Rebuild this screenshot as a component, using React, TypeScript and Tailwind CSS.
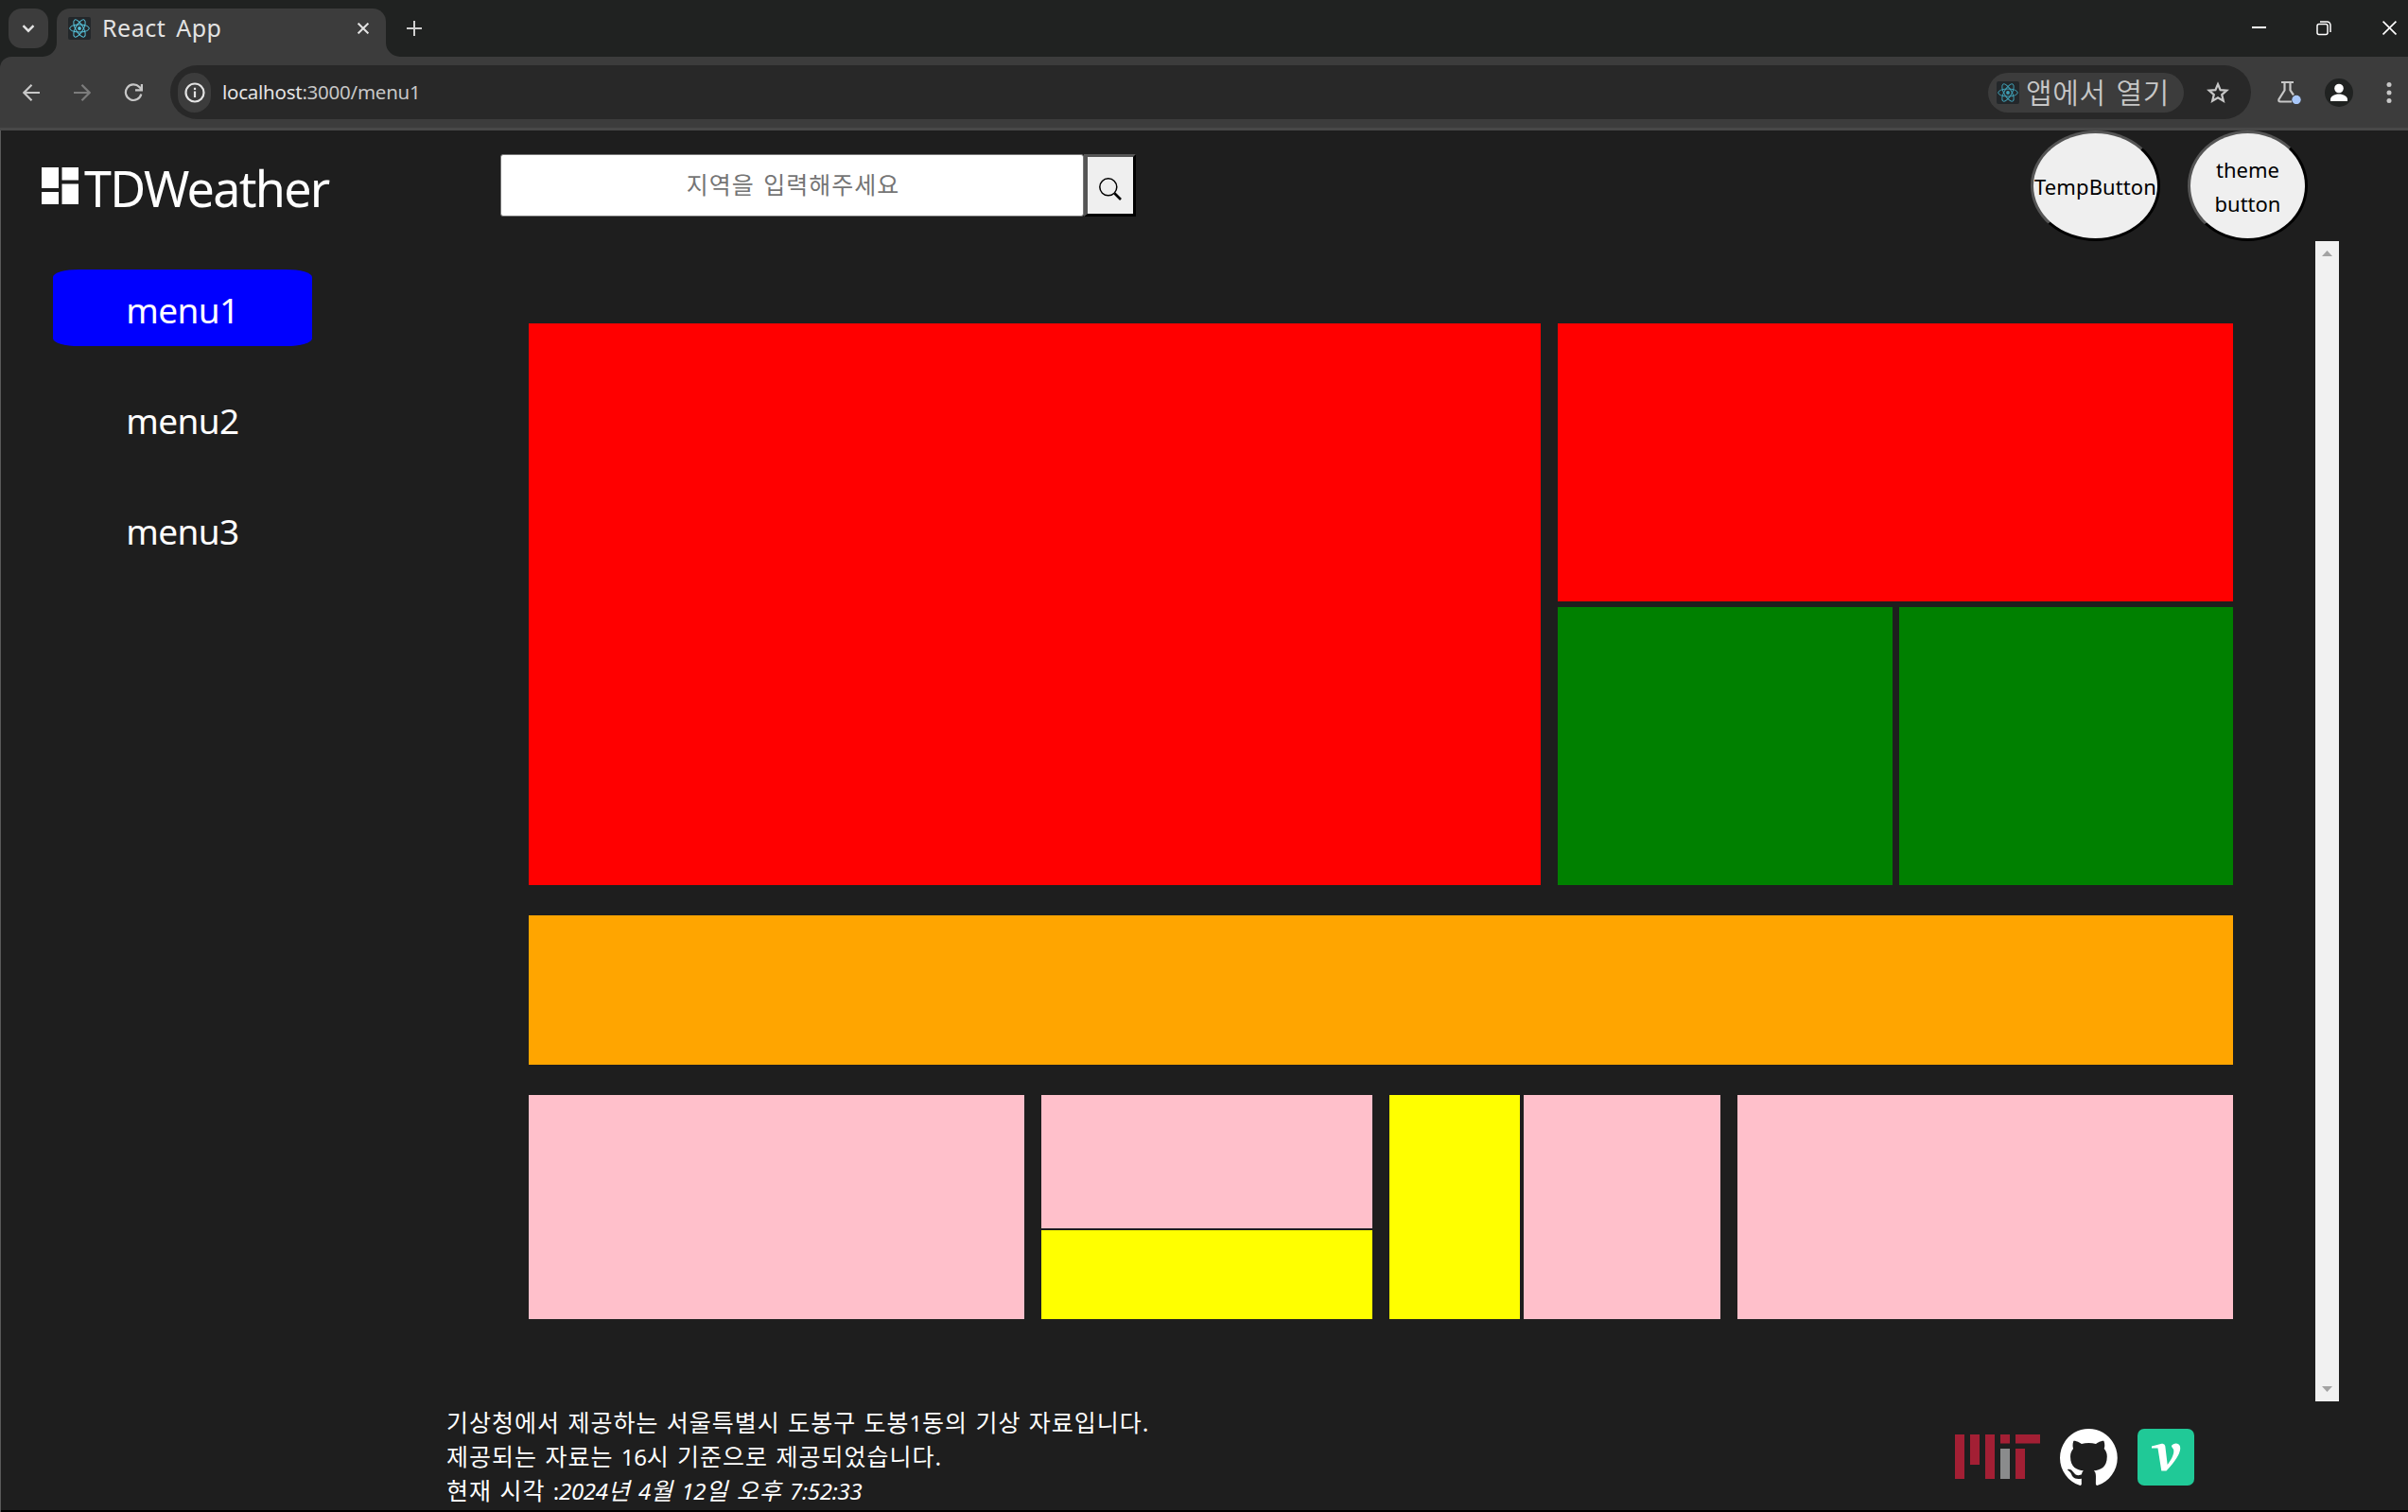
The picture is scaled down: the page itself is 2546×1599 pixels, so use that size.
import React from "react";

function ReactLogo({ className, color = "#58c4dc" }: { className?: string; color?: string }) {
  return (
    <svg viewBox="0 0 24 24" className={className} fill="none" stroke={color} strokeWidth="1">
      <rect width="24" height="24" rx="2" fill="#23272a" stroke="none" />
      <circle cx="12" cy="12" r="1.9" fill={color} stroke="none" />
      <ellipse cx="12" cy="12" rx="10.3" ry="4" />
      <ellipse cx="12" cy="12" rx="10.3" ry="4" transform="rotate(60 12 12)" />
      <ellipse cx="12" cy="12" rx="10.3" ry="4" transform="rotate(120 12 12)" />
    </svg>
  );
}

function TabStrip() {
  return (
    <div className="flex h-[60px] bg-[#202221] text-[#e3e3e3]">
      <div className="ml-[9px] mt-[9px] flex size-[42px] items-center justify-center rounded-[14px] bg-[#3c3c3c]">
        <svg viewBox="0 0 14 9" className="h-[9px] w-[14px]" fill="none" stroke="#e3e3e3" strokeWidth="2.4">
          <path d="M1.5 1.2 7 6.7l5.500-5.500" />
        </svg>
      </div>
      <div className="relative ml-[9px] mt-[9px] flex h-[51px] w-[348px] items-center rounded-t-[14px] bg-[#3c3c3c] pb-[9px] pl-3">
        <svg viewBox="0 0 15 15" className="absolute -left-[15px] bottom-0 size-[15px]" fill="#3c3c3c">
          <path d="M15 0v15H0A15 15 0 0 0 15 0Z" />
        </svg>
        <svg viewBox="0 0 15 15" className="absolute -right-[15px] bottom-0 size-[15px]" fill="#3c3c3c">
          <path d="M0 0v15h15A15 15 0 0 1 0 0Z" />
        </svg>
        <ReactLogo className="size-6" />
        <span className="-mt-0.5 ml-3 w-[125px] whitespace-nowrap text-[25px] leading-none tracking-[0.500px] [word-spacing:4px]">React App</span>
        <svg viewBox="0 0 12 12" className="ml-[145px] size-3" stroke="#e3e3e3" strokeWidth="2">
          <path d="m.6.6 10.800 10.800M11.400.6.6 11.400" />
        </svg>
      </div>
      <svg viewBox="0 0 16 16" className="ml-[22px] mt-[22px] size-4" stroke="#d0d0d0" strokeWidth="2">
        <path d="M8 0v16M0 8h16" />
      </svg>
      <div className="ml-auto flex pt-[22px]">
        <svg viewBox="0 0 15 15" className="size-[15px]" stroke="#fff" strokeWidth="2">
          <path d="M0 7h15" />
        </svg>
        <svg viewBox="0 0 16 16" className="ml-[53px] size-4" fill="none" stroke="#fff" strokeWidth="1.500">
          <rect x="1" y="3.500" width="11" height="11" rx="2" />
          <path d="M4 1h7.500A3.500 3.500 0 0 1 15 4.500V12" />
        </svg>
        <svg viewBox="0 0 16 16" className="ml-[54px] mr-3 size-[15px]" stroke="#fff" strokeWidth="1.700">
          <path d="m.6.6 14.800 14.800M15.400.6.6 15.400" />
        </svg>
      </div>
    </div>
  );
}

function Toolbar() {
  return (
    <div className="bg-[#202221]">
      <div className="flex h-[78px] items-center rounded-tl-xl border-b-[3px] border-[#484848] bg-[#3c3c3c]">
        <svg viewBox="0 0 18 18" className="ml-6 size-[18px]" fill="none" stroke="#c7c7c7" strokeWidth="2.200">
          <path d="M18 9H1.500M9.500.8 1.400 9l8.100 8.200" />
        </svg>
        <svg viewBox="0 0 18 18" className="ml-9 size-[18px]" fill="none" stroke="#7c7c7c" strokeWidth="2.200">
          <path d="M0 9h16.500M8.500.8 16.600 9l-8.100 8.200" />
        </svg>
        <svg viewBox="0 0 20 20" className="ml-[35px] size-5" fill="none" stroke="#c7c7c7" strokeWidth="2.200">
          <path d="M18.300 11.500a8.300 8.300 0 1 1-2-7.500l2.500 2.600M18.900 1v6.300H12" />
        </svg>
        <div className="ml-[29px] flex h-[57px] w-[2200px] items-center rounded-full bg-[#282828]">
          <div className="ml-2 flex h-[42px] w-[35px] items-center justify-center rounded-full bg-[#3c3c3c]">
            <svg viewBox="0 0 22 22" className="size-[22px]" fill="none" stroke="#e3e3e3" strokeWidth="2.200">
              <circle cx="11" cy="11" r="9.500" />
              <path d="M11 9.500v6.500M11 5.800v2.200" />
            </svg>
          </div>
          <span className="ml-3 w-[209px] whitespace-nowrap text-[20.500px] tracking-[-0.250px] text-[#c7c7c7]">
            <span className="text-[#e3e3e3]">localhost</span>:3000/menu1
          </span>
          <div className="ml-auto flex h-[42px] w-[207px] items-center rounded-full bg-[#3c3c3c] pl-[9px]">
            <ReactLogo className="size-6" color="#3f9fb5" />
            <span className="ml-[7px] whitespace-nowrap text-[30px] font-[350] leading-none tracking-[0.700px] text-[#c7c7c7] [word-spacing:2px]">앱에서 열기</span>
          </div>
          <svg viewBox="0 0 24 24" className="ml-6 mr-[23px] size-6" fill="none" stroke="#c7c7c7" strokeWidth="2.200">
            <path d="m12 3 2.600 6.200 6.700.5-5.100 4.400 1.600 6.600L12 17.200l-5.800 3.500 1.600-6.600L2.700 9.700l6.700-.5Z" />
          </svg>
        </div>
        <svg viewBox="0 0 26 25" className="ml-[27px] h-[25px] w-[26px]" fill="none" stroke="#c7c7c7" strokeWidth="2.200">
          <path d="M5 2h13M8.500 2v8.500L2.500 20q-.8 2.500 1.500 2.500h12M14.500 2v8.500l3.500 5" />
          <circle cx="21" cy="20.500" r="4.700" fill="#a8c7fa" stroke="none" />
        </svg>
        <svg viewBox="0 0 30 30" className="ml-[25px] size-[30px]">
          <circle cx="15" cy="15" r="15" fill="#202221" />
          <circle cx="15" cy="10.500" r="4.800" fill="#fff" />
          <path d="M6 24v-2c0-3 4-5.500 9-5.500s9 2.500 9 5.500v2Z" fill="#fff" />
        </svg>
        <svg viewBox="0 0 6 22" className="ml-[35px] h-[22px] w-1.5" fill="#c7c7c7">
          <circle cx="3" cy="2.500" r="2.500" />
          <circle cx="3" cy="11" r="2.500" />
          <circle cx="3" cy="19.500" r="2.500" />
        </svg>
      </div>
    </div>
  );
}

function Header() {
  return (
    <header className="flex h-[117px]">
      <div className="flex w-[528px] pl-[43px] pt-[39px]">
        <svg viewBox="0 0 39 39" className="size-[39px]" fill="#fff">
          <path d="M0 0h18v22H0zM21.500 0H39v13.500H21.500zM0 26h18v13H0zM21.500 17.500H39V39H21.500z" />
        </svg>
        <h1 className="ml-[6px] mt-[-5px] whitespace-nowrap text-[52px] font-normal leading-[54px] tracking-[-1.700px]">TDWeather</h1>
      </div>
      <div className="mt-[25px] flex h-[66px]">
        <input
          className="w-[617px] rounded-[3px] border border-[#767676] bg-white pl-0.5 text-center text-[25px] tracking-[1px] text-black [word-spacing:2px] placeholder:text-[#757575]"
          placeholder="지역을 입력해주세요"
        />
        <button className="flex w-[55px] items-center justify-center border-[3px] border-l-4 border-t-[#555] border-l-[#555] border-r-black border-b-black bg-[#efefef] pt-[8px]">
          <svg viewBox="0 0 24 24" className="size-6" fill="none" stroke="#000" strokeWidth="1.500">
            <circle cx="9.800" cy="9.800" r="9" />
            <path d="m16.500 16.500 6.500 6.500" strokeWidth="2.600" />
          </svg>
        </button>
      </div>
      <div className="ml-auto mr-[106px] flex gap-[29px] text-[22px] leading-9 text-black">
        <button className="flex h-[117px] w-[137px] items-center justify-center rounded-[50%] border-[3px] border-t-[#555] border-l-[#555] border-r-black border-b-black bg-[#efefef]">
          <span className="tracking-[0.100px]">TempButton</span>
        </button>
        <button className="h-[117px] w-[127px] rounded-[50%] border-[3px] border-t-[#555] border-l-[#555] border-r-black border-b-black bg-[#efefef] px-5">
          theme button
        </button>
      </div>
    </header>
  );
}

const MENUS = ["menu1", "menu2", "menu3"];

function Sidebar() {
  return (
    <nav className="flex w-[558px] flex-col gap-9 pl-[55px] pt-[30px]">
      {MENUS.map((m, i) => (
        <a
          key={m}
          className={
            "flex h-[81px] w-[274px] items-center justify-center rounded-[10%] pt-1 text-[37px] tracking-[-0.600px] " +
            (i === 0 ? "bg-[#0000ff]" : "")
          }
        >
          {m}
        </a>
      ))}
    </nav>
  );
}

function Dashboard() {
  return (
    <div className="flex w-[1802px] flex-col gap-8 pt-[87px]">
      <div className="flex h-[594px] gap-[18px]">
        <div className="w-[1070px] bg-[#ff0000]" />
        <div className="flex flex-1 flex-col gap-1.5">
          <div className="flex-1 bg-[#ff0000]" />
          <div className="flex flex-1 gap-[7px]">
            <div className="flex-1 bg-[#008000]" />
            <div className="flex-1 bg-[#008000]" />
          </div>
        </div>
      </div>
      <div className="h-[158px] bg-[#ffa500]" />
      <div className="flex h-[237px] gap-[18px]">
        <div className="w-[524px] bg-[#ffc0cb]" />
        <div className="flex w-[350px] flex-col gap-0.5">
          <div className="h-[141px] bg-[#ffc0cb]" />
          <div className="flex-1 bg-[#ffff00]" />
        </div>
        <div className="flex w-[350px] gap-1">
          <div className="w-[138px] bg-[#ffff00]" />
          <div className="flex-1 bg-[#ffc0cb]" />
        </div>
        <div className="w-[524px] bg-[#ffc0cb]" />
      </div>
    </div>
  );
}

function Scrollbar() {
  return (
    <div className="ml-[87px] flex w-[25px] flex-col items-center justify-between bg-[#f1f1f1] py-[10px]">
      <svg viewBox="0 0 11 6" className="h-1.5 w-[11px]" fill="#a3a3a3">
        <path d="M0 6 5.500 0 11 6Z" />
      </svg>
      <svg viewBox="0 0 11 6" className="h-1.5 w-[11px]" fill="#a3a3a3">
        <path d="M0 0h11L5.500 6Z" />
      </svg>
    </div>
  );
}

// Digits are set slightly tighter than the surrounding Hangul.
function Mixed({ children }: { children: string }) {
  return (
    <>
      {children.split(/([0-9:]+)/).map((part, i) =>
        i % 2 ? (
          <span key={i} className="text-[24px] leading-none tracking-[-0.300px]">
            {part}
          </span>
        ) : (
          part
        ),
      )}
    </>
  );
}

function Footer() {
  return (
    <footer className="flex flex-1 border-b-2 border-black pl-[471px]">
      <div className="pt-1 text-[25px] leading-9 tracking-[1px] [word-spacing:0.900px]">
        <p className="h-9 w-[760px] whitespace-nowrap">
          <Mixed>기상청에서 제공하는 서울특별시 도봉구 도봉1동의 기상 자료입니다.</Mixed>
        </p>
        <p className="h-9 whitespace-nowrap">
          <Mixed>제공되는 자료는 16시 기준으로 제공되었습니다.</Mixed>
        </p>
        <p className="h-9 whitespace-nowrap">
          <Mixed>현재 시각 :</Mixed>
          <i>
            <Mixed>2024년 4월 12일 오후 7:52:33</Mixed>
          </i>
        </p>
      </div>
      <div className="ml-auto mr-[226px] flex items-start pt-[29px]">
        <svg viewBox="0 0 90 48" className="mt-1.5 h-12 w-[90px]" fill="#a31f34">
          <path d="M0 0h10v47H0zM16 0h10v32H16zM32 0h10v47H32zM48 0h10v9.500H48zM64 0h26v9.500H64zM64 15h10v32H64z" />
          <path d="M48 15h10v32H48z" fill="#8a8b8c" />
        </svg>
        <svg viewBox="0 0 98 96" className="ml-[21px] h-[60px] w-[61px]" fill="#fff">
          <path
            fillRule="evenodd"
            clipRule="evenodd"
            d="M48.854 0C21.839 0 0 22 0 49.217c0 21.756 13.993 40.172 33.405 46.690 2.427.490 3.316-1.059 3.316-2.362 0-1.141-.080-5.052-.080-9.127-13.590 2.934-16.420-5.867-16.420-5.867-2.184-5.704-5.420-7.170-5.420-7.170-4.448-3.015.324-3.015.324-3.015 4.934.326 7.523 5.052 7.523 5.052 4.367 7.496 11.404 5.378 14.235 4.074.404-3.178 1.699-5.378 3.074-6.600-10.839-1.141-22.243-5.378-22.243-24.283 0-5.378 1.940-9.778 5.014-13.200-.485-1.222-2.184-6.275.486-13.038 0 0 4.125-1.304 13.426 5.052a46.970 46.970 0 0 1 12.214-1.630c4.125 0 8.330.571 12.213 1.630 9.302-6.356 13.427-5.052 13.427-5.052 2.670 6.763.970 11.816.485 13.038 3.155 3.422 5.015 7.822 5.015 13.200 0 18.905-11.404 23.060-22.324 24.283 1.780 1.548 3.316 4.481 3.316 9.126 0 6.600-.080 11.897-.080 13.526 0 1.304.890 2.853 3.316 2.364 19.412-6.520 33.405-24.935 33.405-46.691C97.707 22 75.788 0 48.854 0z"
          />
        </svg>
        <svg viewBox="0 0 60 60" className="ml-[21px] size-[60px]">
          <rect width="60" height="60" rx="7" fill="#20c997" />
          <path
            fill="#fff"
            d="M15 18.500 25.500 15.800q3.300-.5 3.800 2.500L31.700 38c4.500-6 6.300-10.500 6.600-13.500q.2-3-1.800-5-1-1.300 0-2.300 2-1.800 4.500-1.600 4.500.4 4.200 5.600-.5 8-14.700 23.300h-5.200L21.500 20.600 15 20.400Z"
          />
        </svg>
      </div>
    </footer>
  );
}

export default function App() {
  return (
    <div className="flex h-[1599px] w-[2546px] flex-col overflow-hidden bg-[#1e1e1e] font-['Noto_Sans','Noto_Sans_CJK_KR',sans-serif] text-white">
      <TabStrip />
      <Toolbar />
      <div className="flex flex-1 flex-col border-l border-[#5a5a5a]">
        <Header />
        <div className="flex h-[1227px]">
          <Sidebar />
          <Dashboard />
          <Scrollbar />
        </div>
        <Footer />
      </div>
    </div>
  );
}
